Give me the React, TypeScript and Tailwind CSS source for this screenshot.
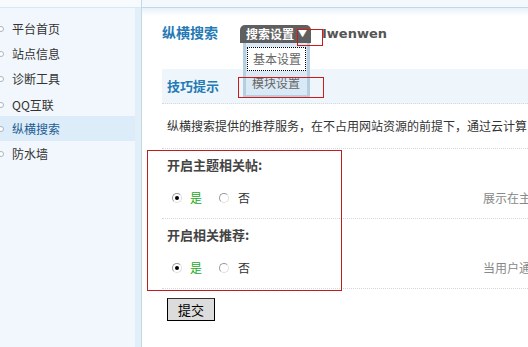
const menu = ['平台首页', '站点信息', '诊断工具', 'QQ互联', '纵横搜索', '防水墙']

function Radio({ checked }: { checked?: boolean }) {
  return (
    <span className="w-[10px] h-[10px] rounded-full border border-[#9a9a9a] border-r-[#e0e0e0] border-b-[#e0e0e0] bg-white flex items-center justify-center">
      {checked && <span className="w-[4px] h-[4px] rounded-full bg-black" />}
    </span>
  )
}

function Setting({ label, desc }: { label: string; desc: string }) {
  return (
    <div className="border-b border-dotted border-[#d3d9de] pl-[5px] pb-[10px]">
      <div className="h-[20px] pt-[6px] leading-[20px] font-bold text-[13px] text-[#444]">{label}</div>
      <div className="flex items-center h-[20px] mt-[19px]">
        <div className="flex items-center w-[316px] shrink-0">
          <span className="ml-[5px]"><Radio checked /></span>
          <span className="ml-[8px] text-[#22aa22]">是</span>
          <span className="ml-[17px]"><Radio /></span>
          <span className="ml-[9px] text-[#333]">否</span>
        </div>
        <span className="whitespace-nowrap text-[#888]">{desc}</span>
      </div>
    </div>
  )
}

export default function App() {
  return (
    <div
      className="relative w-[528px] h-[347px] overflow-hidden flex bg-white text-[12px]"
      style={{ fontFamily: '"Noto Sans CJK SC", "Noto Sans", sans-serif' }}
    >
      {/* sidebar */}
      <div className="w-[142px] shrink-0 flex flex-col border-r border-[#c3d9ea] bg-[#f1f7fc]">
        <div className="h-[8px] bg-[#f7fbfe] border-b border-[#dbe8f1]" />
        <div className="flex flex-1">
          <ul className="w-[135px] pt-[8px]">
            {menu.map((m, i) => (
              <li
                key={m}
                className={
                  'flex items-center h-[25px] ' +
                  (i === 4 ? 'bg-[#dcecf8] text-[#1f5d93]' : 'text-[#333]') +
                  (i === 3 ? ' pt-[3px]' : '')
                }
              >
                <span className="w-[6px] h-[6px] -ml-[2px] rounded-full border border-[#aab4bc] bg-white" />
                <span className="ml-[8px]">{m}</span>
              </li>
            ))}
          </ul>
          <div className="w-[6px] bg-[#e2eff9]" />
        </div>
      </div>

      {/* main */}
      <div className="flex-1 flex flex-col min-w-0">
        <div className="h-[8px] bg-[#f2f8fc] border-b border-[#c5d7e3]" />
        <div className="h-[8px] bg-gradient-to-b from-[#e6f2fb] to-white" />
        <div className="flex items-start h-[53px] pl-[20px] pt-[9px]">
          <span className="font-bold text-[14px] leading-[18px] text-[#2579b5] -mt-[2px]">纵横搜索</span>
          <span className="ml-[22px] h-[18px] w-[71px] rounded-t-[5px] bg-[#5f5f5f] text-white font-bold text-[12px] leading-[18px] flex items-center pl-[6px]">
            搜索设置<span className="ml-[4px] text-[9px]">▼</span>
          </span>
          <span
            className="ml-[11px] font-bold text-[13px] leading-[18px] text-[#555]"
            style={{ fontFamily: '"DejaVu Sans", sans-serif' }}
          >
            Iwenwen
          </span>
        </div>

        <div className="ml-[20px]">
          <div className="h-[35px] bg-[#eef6fc] border-b border-dotted border-[#d3d9de] flex items-center pl-[5px] font-bold text-[13px] text-[#2579b5]">
            技巧提示
          </div>
          <div className="h-[45px] border-b border-dotted border-[#d3d9de] flex items-center pl-[5px] text-[#333] whitespace-nowrap">
            纵横搜索提供的推荐服务，在不占用网站资源的前提下，通过云计算
          </div>
          <Setting label="开启主题相关帖:" desc="展示在主题页下方" />
          <Setting label="开启相关推荐:" desc="当用户通过搜索" />
          <button className="mt-[9px] ml-[5px] w-[48px] h-[23px] bg-[#dcdcdc] border border-black border-t-[#333] text-[13px] text-black leading-[20px]">
            提交
          </button>
        </div>
      </div>

      {/* dropdown */}
      <div className="absolute left-[243px] top-[43px] w-[67px] h-[55px] bg-[#d9e9f5] border-x-[3px] border-b-[3px] border-[#b6cfe0] text-[#666]">
        <div className="mt-[4px] mx-[1px] h-[24px] bg-white border border-dotted border-black flex items-center pl-[5px]">基本设置</div>
        <div className="h-[24px] flex items-center pl-[6px]">模块设置</div>
      </div>

      {/* annotation boxes */}
      <div className="absolute left-[297px] top-[29px] w-[26px] h-[17px] border border-[#cc1b1b]" />
      <div className="absolute left-[238px] top-[77px] w-[86px] h-[21px] border border-[#cc1b1b]" />
      <div className="absolute left-[147px] top-[150px] w-[195px] h-[141px] border border-[#c01c1c]" />
    </div>
  )
}
